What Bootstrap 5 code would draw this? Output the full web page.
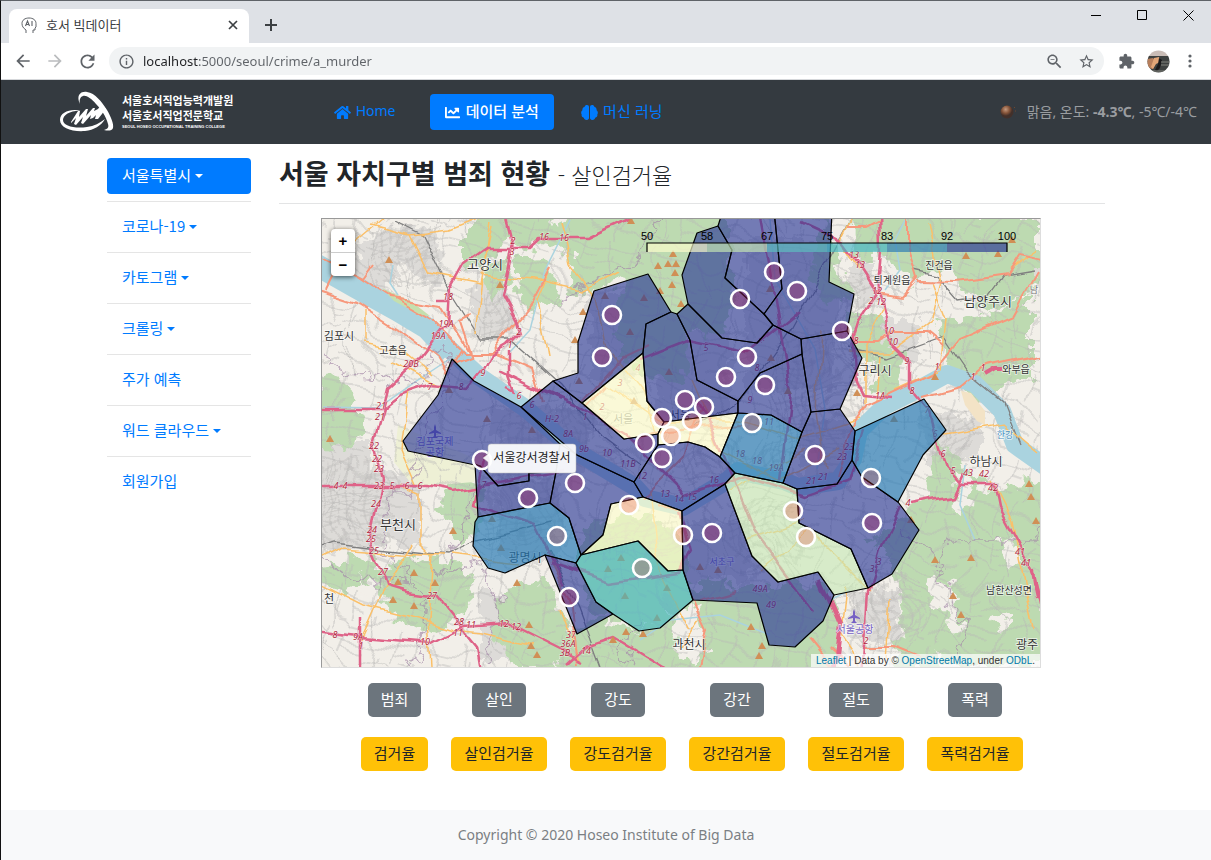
<!DOCTYPE html>
<html lang="ko">
<head>
<meta charset="utf-8">
<meta name="viewport" content="width=device-width, initial-scale=1">
<title>호서 빅데이터</title>
<link href="https://cdn.jsdelivr.net/npm/bootstrap@5.3.0/dist/css/bootstrap.min.css" rel="stylesheet">
<style>
  body{font-family:"Noto Sans","Noto Sans CJK KR",sans-serif;font-size:15px;line-height:24px;color:#212529}
  .window-frame{border-left:1px solid #111;border-top:1px solid #5f6368}
  .ko{font-family:"Noto Sans CJK KR",sans-serif}

  /* browser chrome */
  .tab-strip{background:#dee1e6;height:42px}
  .page-tab{width:240px;height:34px;border-radius:8px 8px 0 0;font-size:13px;line-height:16px;color:#3c4043;padding:0 10px 2px 12px}
  .plain-btn{border:0;background:none;padding:0;display:flex;align-items:center;justify-content:center;color:#5f6368}
  .win-btn{width:46px;height:28px;color:#000}
  .tool-btn{width:28px;height:28px}
  .toolbar-row{height:37px;padding:0 7px 0 8px;border-bottom:1px solid #d5d7da;gap:4px}
  .omnibox{height:28px;border-radius:14px;background:#f1f3f4;margin:0 4px;padding:0 4px 0 9px}
  .omnibox input{border:0;outline:0;padding:0;font-size:13px;color:transparent;
    background:linear-gradient(90deg,#202124 56px,#5f6368 56px);-webkit-background-clip:text;background-clip:text}

  /* site header */
  .site-nav{background:#343a40;height:64px;padding:0 14px 0 58px}
  .brand{width:172px;margin-right:88px;color:#fff;gap:7px}
  .brand-ko{font-size:11px;line-height:15px;font-weight:700}
  .brand-en{font-family:"Liberation Sans Narrow","Liberation Sans",sans-serif;font-size:4px;line-height:8px;font-weight:700}
  .site-nav .nav{gap:12px}
  .site-nav .nav-link,.side-nav .nav-link{color:#007bff;height:36px;padding:5px 15px 7px;line-height:24px;border-radius:4px;white-space:nowrap}
  .site-nav .nav-link.active,.side-nav .nav-link.active{background:#007bff;color:#fff}
  .site-nav .nav-link.active{font-weight:500}
  .site-nav .nav-item:first-child{margin-right:8px}
  .site-nav .latin{font-size:14px}
  .site-nav .nav-link svg{margin-right:1px}
  .weather{color:#9a9da0;font-size:14px;gap:10px}

  /* page body */
  .page-wrap{max-width:998px;gap:28px;padding-top:14px}
  .side-nav{width:144px}
  .side-nav .nav-item+.nav-item{border-top:1px solid #e5e5e5;margin-top:7px;padding-top:7px}
  .dropdown-toggle::after{margin-left:4px;vertical-align:3px}
  .page-title{font-size:27px;line-height:30px;font-weight:700;padding-bottom:15px;border-bottom:1px solid #e3e4e5;margin:0 0 14px;height:46px}
  .page-title small{font-size:22px;font-weight:300}
  .map-pad{padding:0 64px 0 42px}
  .map-box{border:1px solid;border-color:#999 #ddd #ddd #999;background:#f2efe9}
  .map-box>svg{display:block;width:100%;height:auto}
  .zoom-ctl{position:absolute;left:9px;top:10px;background:#fff;border-radius:4px;box-shadow:0 1px 5px rgba(0,0,0,.65);width:24px}
  .zoom-ctl button{width:24px;height:23px;font:700 15px "Liberation Sans",sans-serif;color:#000}
  .zoom-ctl button+button{border-top:1px solid #ccc;height:24px}
  .map-credit{position:absolute;right:0;bottom:0;background:rgba(255,255,255,.7);padding:0 5px;
    font:10px/13px "Liberation Sans",sans-serif;color:#333}
  .map-credit a{color:#0078a8;text-decoration:none}
  .crime-grid{display:grid;grid-template-columns:90fr repeat(5,119fr);max-width:685px;margin:15px auto 39px;row-gap:20px;justify-items:center}
  .crime-grid .btn{font-size:15px;line-height:22px;padding:4px 12px 6px;border-radius:4px;border:0;margin:1px 0;min-height:32px;box-shadow:0 0 0 1px var(--bs-btn-bg)}
  .crime-grid .btn-secondary{--bs-btn-bg:#6c757d}
  .crime-grid .btn-warning{--bs-btn-color:#212529}
  .site-footer{background:#f8f9fa;color:#7b7f83;font-size:14px;height:50px}

  /* map layers */
  .seoul polygon{stroke:#000;stroke-width:1.2;stroke-linejoin:round;fill-opacity:.62}
  .lv6{fill:#253494}.lv5{fill:#2378b4}.lv4{fill:#41b6c4}.lv2{fill:#c7e9b4}.lv1{fill:#ffffcc}
  .seoul .lv5{fill-opacity:.68}
  .stations circle{r:9px;fill:rgba(160,40,100,.42);stroke:#fff;stroke-width:2.6}
  .stations .warm{fill:rgba(230,70,60,.28)}
  .place{font-family:"Noto Sans CJK KR",sans-serif;fill:#333;text-anchor:middle;paint-order:stroke;stroke:#fff;stroke-width:1.6;stroke-opacity:.7}
  .exit-no{font:italic 9px "Noto Sans",sans-serif;fill:#b0263c;text-anchor:middle;paint-order:stroke;stroke:#fff;stroke-width:1;stroke-opacity:.6}
  .scale-no{font:11px "Liberation Sans",sans-serif;text-anchor:middle;fill:#000}
</style>
</head>
<body>
<div class="window-frame min-vh-100 d-flex flex-column">

  <div class="tab-strip d-flex">
    <div class="page-tab bg-white d-flex align-items-center align-self-end ms-2">
      <svg width="17" height="17" viewBox="0 0 17 17" fill="none" stroke="#5f6368"><path d="M5 16v-3C2 11 1 9 1 6.500C1 3 4 1 8 1s7 2 7 5.500V10l-1 1v2h-2v3"/><path d="M4.500 9l2-5 2 5M5.500 7.500h2M11 4v5" stroke-width="1.100"/></svg>
      <span class="ko ms-2 flex-grow-1">호서 빅데이터</span>
      <button class="plain-btn" aria-label="탭 닫기"><svg width="12" height="12" viewBox="0 0 12 12" stroke="#3c4043" stroke-width="1.700"><path d="M2 2l8 8M10 2l-8 8"/></svg></button>
    </div>
    <button class="plain-btn align-self-end mb-1 tool-btn ms-2" aria-label="새 탭"><svg width="14" height="14" viewBox="0 0 14 14" stroke="#3c4043" stroke-width="2"><path d="M7 1v12M1 7h12"/></svg></button>
    <div class="d-flex ms-auto">
      <button class="plain-btn win-btn" aria-label="최소화"><svg width="10" height="10"><path d="M0 5.500h10" stroke="#000"/></svg></button>
      <button class="plain-btn win-btn" aria-label="최대화"><svg width="10" height="10"><path d="M.5.500h9v9h-9z" fill="none" stroke="#000"/></svg></button>
      <button class="plain-btn win-btn" aria-label="닫기"><svg width="11" height="11"><path d="M.5.500l10 10M10.500.500l-10 10" stroke="#000"/></svg></button>
    </div>
  </div>

  <div class="toolbar-row bg-white d-flex align-items-center">
    <button class="plain-btn tool-btn" aria-label="뒤로"><svg width="20" height="20" viewBox="0 0 24 24" fill="currentColor"><path d="M20 11H7.830l5.590-5.590L12 4l-8 8 8 8 1.410-1.410L7.830 13H20v-2z"/></svg></button>
    <button class="plain-btn tool-btn" aria-label="앞으로"><svg width="20" height="20" viewBox="0 0 24 24" fill="#babcbe"><path d="M4 11h12.170l-5.590-5.590L12 4l8 8-8 8-1.410-1.410L16.170 13H4v-2z"/></svg></button>
    <button class="plain-btn tool-btn" aria-label="새로고침"><svg width="21" height="21" viewBox="0 0 24 24" fill="currentColor"><path d="M17.650 6.350C16.200 4.900 14.210 4 12 4c-4.420 0-7.990 3.580-7.990 8s3.570 8 7.990 8c3.730 0 6.840-2.550 7.730-6h-2.080c-.82 2.330-3.040 4-5.650 4-3.310 0-6-2.690-6-6s2.690-6 6-6c1.660 0 3.140.69 4.220 1.780L13 11h7V4l-2.350 2.350z"/></svg></button>
    <div class="omnibox d-flex align-items-center flex-grow-1">
      <svg width="17" height="17" viewBox="0 0 24 24" fill="#5f6368" class="me-2"><path d="M11 7h2v2h-2zm0 4h2v6h-2zm1-9C6.480 2 2 6.480 2 12s4.480 10 10 10 10-4.480 10-10S17.520 2 12 2zm0 18c-4.410 0-8-3.590-8-8s3.590-8 8-8 8 3.590 8 8-3.590 8-8 8z"/></svg>
      <input class="flex-grow-1" type="text" aria-label="주소" value="localhost:5000/seoul/crime/a_murder">
      <button class="plain-btn tool-btn me-1" aria-label="축소"><svg width="19" height="19" viewBox="0 0 24 24" fill="currentColor"><path d="M15.500 14h-.79l-.28-.27C15.410 12.590 16 11.110 16 9.500 16 5.910 13.090 3 9.500 3S3 5.910 3 9.500 5.910 16 9.500 16c1.610 0 3.090-.59 4.230-1.570l.27.28v.79l5 4.990L20.490 19l-4.990-5zm-6 0C7.010 14 5 11.990 5 9.500S7.010 5 9.500 5 14 7.010 14 9.500 11.990 14 9.500 14zM7 9h5v1H7z"/></svg></button>
      <button class="plain-btn tool-btn" aria-label="북마크"><svg width="17" height="17" viewBox="0 0 24 24" fill="currentColor"><path d="M22 9.240l-7.190-.62L12 2 9.190 8.630 2 9.240l5.460 4.730L5.820 21 12 17.270 18.180 21l-1.630-7.030L22 9.240zM12 15.400l-3.760 2.270 1-4.280-3.320-2.880 4.380-.38L12 6.100l1.710 4.040 4.380.38-3.320 2.880 1 4.280L12 15.400z"/></svg></button>
    </div>
    <button class="plain-btn tool-btn" aria-label="확장 프로그램"><svg width="17" height="17" viewBox="0 0 24 24" fill="currentColor"><path d="M20.500 11H19V7c0-1.100-.9-2-2-2h-4V3.500C13 2.120 11.880 1 10.500 1S8 2.120 8 3.500V5H4c-1.100 0-1.990.9-1.990 2v3.800H3.500c1.490 0 2.700 1.210 2.700 2.700s-1.210 2.700-2.700 2.700H2V20c0 1.100.9 2 2 2h3.800v-1.500c0-1.490 1.210-2.700 2.700-2.700 1.490 0 2.700 1.210 2.700 2.700V22H17c1.100 0 2-.9 2-2v-4h1.500c1.380 0 2.500-1.120 2.500-2.500S21.880 11 20.500 11z"/></svg></button>
    <button class="plain-btn tool-btn" aria-label="프로필"><svg width="23" height="23" viewBox="0 0 23 23"><defs><clipPath id="face"><circle cx="11.500" cy="11.500" r="11"/></clipPath></defs><g clip-path="url(#face)"><path fill="#c9bcb6" d="M0 0h23v7H0z"/><path fill="#3e4140" d="M0 6h23v17H0z"/><path fill="#b77f5c" d="M0 9l6-1 3 4-3 7-6-1z"/><path fill="#e2a678" d="M7 8l5-1 1 5-4 2-3 5-2-2z"/><path fill="#1c1b1c" d="M12 8l3 2-2 8-3 3-2-1 3-6z"/><path stroke="#81837d" d="M14 12h9M14 15h9M3 21h15"/></g></svg></button>
    <button class="plain-btn tool-btn" aria-label="메뉴"><svg width="4" height="16" fill="#5f6368"><circle cx="2" cy="3" r="1.600"/><circle cx="2" cy="8" r="1.600"/><circle cx="2" cy="13" r="1.600"/></svg></button>
  </div>

  <nav class="site-nav d-flex align-items-center">
    <a class="brand d-flex align-items-center text-decoration-none flex-shrink-0" href="#">
      <svg class="flex-shrink-0" width="56" height="42" viewBox="0 0 56 42" fill="#fff"><path d="M21 13C17 5 21 0 28 1c8 1 15 10 20 18 4 7 7 14 6 18-1 3-5 3-9 2 4-1 5-3 4-6-2-8-7-15-12-20-5-6-10-9-13-8-3 1-4 4-3 8z"/><path d="M23 20C12 19 4 24 4 29c0 6 12 9 24 7 7-1 13-4 18-8-4 7-11 11-20 12C13 41 1 37 1 29c0-8 11-12 22-9z"/><path d="M12 31l7-11 2 0-1 6 7-8h2l-2 7 7-8 2 0-1 3 4-2 3-4 2 1-2 3 5-1-4 6-4 5-3 0 1-4-3 3-3 1 1-4-8 9-2-1 2-6-7 8-2-1 2-6-5 5z"/></svg>
      <span class="ko text-nowrap"><span class="d-block brand-ko">서울호서직업능력개발원</span><span class="d-block brand-ko">서울호서직업전문학교</span><span class="d-block brand-en">SEOUL HOSEO OCCUPATIONAL TRAINING COLLEGE</span></span>
    </a>
    <ul class="nav flex-nowrap">
      <li class="nav-item"><a class="nav-link latin" href="#"><svg width="17" height="15" viewBox="0 0 576 512" fill="currentColor"><path d="M280.370 148.260L96 300.110V464a16 16 0 0 0 16 16l112.060-.29a16 16 0 0 0 15.920-16V368a16 16 0 0 1 16-16h64a16 16 0 0 1 16 16v95.640a16 16 0 0 0 16 16.050L464 480a16 16 0 0 0 16-16V300L295.670 148.260a12.190 12.190 0 0 0-15.300 0zM571.600 251.470L488 182.560V44.050a12 12 0 0 0-12-12h-56a12 12 0 0 0-12 12v72.610L318.470 43a48 48 0 0 0-61 0L4.340 251.470a12 12 0 0 0-1.600 16.900l25.500 31A12 12 0 0 0 45.150 301l235.220-193.740a12.190 12.190 0 0 1 15.300 0L530.900 301a12 12 0 0 0 16.900-1.600l25.500-31a12 12 0 0 0-1.700-16.930z"/></svg> Home</a></li>
      <li class="nav-item"><a class="nav-link active ko" href="#" aria-current="page"><svg width="15" height="15" viewBox="0 0 512 512" fill="currentColor"><path d="M496 384H64V80c0-8.840-7.160-16-16-16H16C7.160 64 0 71.160 0 80v336c0 17.670 14.330 32 32 32h464c8.840 0 16-7.160 16-16v-32c0-8.840-7.160-16-16-16zM464 96H345.940c-21.380 0-32.090 25.850-16.970 40.970l32.400 32.400L288 242.750l-73.370-73.370c-12.500-12.500-32.760-12.500-45.250 0l-68.690 68.690c-6.250 6.250-6.250 16.380 0 22.630l22.620 22.620c6.250 6.250 16.380 6.250 22.630 0L192 237.250l73.370 73.370c12.500 12.500 32.760 12.500 45.250 0l96-96 32.400 32.400c15.120 15.120 40.970 4.410 40.970-16.970V112c.01-8.840-7.150-16-15.990-16z"/></svg> 데이터 분석</a></li>
      <li class="nav-item"><a class="nav-link ko" href="#"><svg width="17" height="15" viewBox="0 0 17 15" fill="currentColor"><path d="M8 2v11c0 1-1 2-2.200 1.900C4 15 3 14 2.800 12.800 1 12.500.3 11 .7 9.600-.3 8 .2 6 1.400 5.300 1.200 3.600 2 2.300 3.500 2 4 .5 5 0 6 .1 7.200.1 8 .9 8 2zM9 2v11c0 1 1 2 2.200 1.900C13 15 14 14 14.200 12.800c1.800-.3 2.500-1.800 2.100-3.200 1-1.600.5-3.600-.7-4.300.2-1.700-.6-3-2.100-3.300C13 .5 12 0 11 .1 9.800.1 9 .9 9 2z"/></svg> 머신 러닝</a></li>
    </ul>
    <div class="weather d-flex align-items-center ms-auto text-nowrap">
      <svg width="18" height="16" viewBox="0 0 18 16"><defs><radialGradient id="sun" cx=".4" cy=".3"><stop offset="0" stop-color="#c49a80"/><stop offset=".6" stop-color="#855338"/><stop offset="1" stop-color="#43302a"/></radialGradient></defs><circle cx="8" cy="8" r="6.500" fill="url(#sun)"/><path stroke="#70472f" d="M15 4l1-1M16 7h1"/></svg>
      <span>맑음, 온도: <strong>-4.3℃</strong>, -5℃/-4℃</span>
    </div>
  </nav>

  <div class="page-wrap d-flex w-100 mx-auto flex-grow-1">
    <aside class="flex-shrink-0">
      <ul class="side-nav nav flex-column ko">
        <li class="nav-item"><a class="nav-link active dropdown-toggle" href="#">서울특별시</a></li>
        <li class="nav-item"><a class="nav-link dropdown-toggle" href="#">코로나-19</a></li>
        <li class="nav-item"><a class="nav-link dropdown-toggle" href="#">카토그램</a></li>
        <li class="nav-item"><a class="nav-link dropdown-toggle" href="#">크롤링</a></li>
        <li class="nav-item"><a class="nav-link" href="#">주가 예측</a></li>
        <li class="nav-item"><a class="nav-link dropdown-toggle" href="#">워드 클라우드</a></li>
        <li class="nav-item"><a class="nav-link" href="#">회원가입</a></li>
      </ul>
    </aside>

    <main class="flex-grow-1">
      <h1 class="page-title ko">서울 자치구별 범죄 현황 <small>- 살인검거율</small></h1>
      <div class="map-pad">
      <div class="map-box position-relative">
        <svg viewBox="322 219 718 448" role="img" aria-label="서울 자치구별 살인검거율 지도">
          <defs>
            <filter id="rough" x="-5%" y="-5%" width="110%" height="110%"><feTurbulence type="fractalNoise" baseFrequency=".07" numOctaves="3" seed="4"/><feDisplacementMap in="SourceGraphic" scale="26" xChannelSelector="R" yChannelSelector="G"/></filter>
            <filter id="bend" x="-5%" y="-5%" width="110%" height="110%"><feTurbulence type="fractalNoise" baseFrequency=".018" numOctaves="2" seed="9"/><feDisplacementMap in="SourceGraphic" scale="46" xChannelSelector="R" yChannelSelector="G"/></filter>
            <filter id="curve" x="-5%" y="-5%" width="110%" height="110%"><feTurbulence type="fractalNoise" baseFrequency=".035" numOctaves="1" seed="2"/><feDisplacementMap in="SourceGraphic" scale="14" xChannelSelector="R" yChannelSelector="G"/></filter>
            <pattern id="lanes" width="46" height="40" patternUnits="userSpaceOnUse" patternTransform="rotate(14)"><path d="M0 9h46M0 29h26l8 6h12M10 0v20l5 20M33 0v29M33 18h13M15 29v-8" fill="none" stroke="#b9b8b6" stroke-width=".8"/></pattern>
            <pattern id="blocks" width="18" height="14" patternUnits="userSpaceOnUse" patternTransform="rotate(-12)"><path d="M0 5h18M0 11h10M5 0v14M13 0v11" fill="none" stroke="#bdbbb9" stroke-width=".8"/></pattern>
            <path id="peak" d="M0-4l4 7h-8z" fill="#d08f55"/>
          </defs>

          <rect x="300" y="200" width="760" height="490" fill="#f2efe9"/>
          <g filter="url(#rough)">
            <path fill="#dddbd8" d="M365 235l60-10 20 30-5 30-40-20-22 30-30-20zM470 290l35-20 10 60-40 10zM300 440h70v110H300zM340 470h80v75h-70zM490 410h100v60l-80 10zM590 290h50v90h-50zM650 330h80v100h-70zM745 240h90v150h-90zM880 320h40v40h-40zM845 260h30v40h-30zM920 410l60 10v40h-50zM1010 270h40v20h-40zM500 480h60v80h-60zM690 520h60v60h-60zM800 420h50v60h-50zM480 590h60v70h-60zM850 590h50v50h-50z"/>
            <path fill="#bddab1" d="M460 235l30-25 50-5 30 30-30 12-30-5-20 20-30 5zM480 270l25-10 5 30-20 8zM515 255l35 5 10 40-30 12-15-30zM570 205l70-5h90v60l-30 40-30 15-28-42-55 20-17 0 5-30-25-20z"/>
            <path fill="#bddab1" d="M640 220l60-10 35 60-10 65-35-8-5 55-35-5-30-20 0-60zM830 215l10 60 15 20-30 10-15-40z"/>
            <path fill="#bddab1" d="M320 375l25 10 22 45-30 20-35-10zM455 470l30 15-5 40-18 20-25-35zM415 555l50 10 10 30-30 40-50-15-20-50zM330 560l45-5 5 25-35 15-30-15zM500 590l45-10 20 40-10 50h-40l-20-35zM555 640l40-20 60 10 25-40 60 15 20 45-30 30H560zM585 530l40-20 50 20 20 50-40 50-60-15-20-40z"/>
            <path fill="#bddab1" d="M700 580l50 10 50-10 30 10 10 90H700zM850 215h190v75l-55 20-40-40-30 15-30-30-30 5zM845 310l35 5 10 40-35 5zM940 325l45-10 45-20v80l-55 25-30-50zM875 345l30 5-10 50-25-5zM920 500l25-60 40 50 60-10v185h-95l-45-35-10-70-25-15zM890 640l30-10 25 40h-45z"/>
            <path fill="#f2efe9" d="M922 580l14-10 24 30-20 10zM945 605l10-3 6 30-10 4zM990 620l22-6-8 18zM1000 540l10-4 12 28-10 3zM957 470l15 6-2 30-12 10zM360 570l10 30-8-4zM670 615l25-12 15 50-30 10z"/>
          </g>
          <path fill="#eef0d5" d="M398 425l80 35-4 22-60 5-20-25z"/>
          <g filter="url(#bend)"><path fill="url(#lanes)" d="M270 170h800v530H270z"/><path fill="url(#blocks)" d="M370 225h70v60h-60zM480 275h35v65h-40zM300 460h90v90h-90zM500 410h110v60H500zM740 500h60v70h-60zM770 330h90v130h-90zM690 440h90v40h-90zM925 415h45v40h-40zM480 480h80v60h-80zM600 520h80v40h-80zM840 270h40v60h-40zM850 580h70v60h-70z"/></g>

          <g fill="none" stroke="#aad3df">
            <path stroke-width="22" d="M315 264l42 24 40 22 30 18 23 25"/>
            <path stroke-width="18" stroke-linejoin="round" d="M446 346l34 31 45 31 52 44 58 35 10 11 38 9 45-27 10-9 46 10 14 6 40-6 15-22 6-28 26-25 38-19 24-13 28 10 27 27 13 34 34 24"/>
            <path stroke-width="1.500" d="M393 265l-3 18 8 12M323 407l55 1 40-28 30-20M570 220l-25 50-15 60-20 22M885 290l15-20-5-30 10-20M965 465l-5 40 15 35M770 219l5 60 40 70 10 60-8 60M850 590l-20 10M640 640l30-20 50-5 50 20"/>
          </g>
          <path fill="#f3e3c6" d="M961 391l10 2 14 18 0 14-8-4-12-16z"/>
          <path fill="#c5dfae" d="M382 288l30 14 18 14-10-1-26-14z"/>

          <g fill="none" stroke="#a58aa8" stroke-width="1.600" stroke-opacity=".65" filter="url(#rough)">
            <path d="M323 353l20 20 28 2 20 8 25-2 12-12 10-22 12 4-2 38-26 40-6 40-4 25h-24l-5 60 20 15 24 30-4 40-12 40"/>
            <path d="M560 300l30-18 45-20 25-42M475 480l-10 50-25 45 40-15 20 40-10 60M860 310l-10 40 10 50M900 530l40 30 5-20 40 0 50 0 10-40M940 565l10 40 15 20-5 35M640 620l-20 30 10 15M323 560l30 20 60 5"/>
          </g>

          <g filter="url(#curve)">
          <g fill="none" stroke="#808080" stroke-width="1.300">
            <path d="M393 220l29 15 25 53 33 52h30l50 45 40 50 40 30M313 550l20-7 114 12 26-12 80-20M914 270l22 5 23 27 28-4 16-22 30-5M850 348l37 9 56-20 24 35 36 30 17 43M600 667l-22-60-30-60M850 220l-60 110-50 70-50 30"/>
          </g>
          <g fill="none" stroke="#fbc069" stroke-width="1.500">
            <path d="M350 245l30-25M370 225l40 10 40-5 30-12M410 235l20 40 50 10 12-60M490 220l-8 60-7 55M480 275l55 5 45 10 40-20M550 270l-12 30 10 60M363 342l40 8 30 25M365 340v-30M393 360l50 28M410 390l-8 60 15 35M400 485l20 8 0 50 10 10M313 580l50 25 40 10 50 15 30 3 50 12M433 555l-5 65 3 45M412 545l-30 50-20 45M313 563l30-15 60 5 40 2M450 555l70 8"/>
            <path d="M560 220l10 45 25 30 10 50 40 50 10 40M690 380l30 70 60 30 60-30M600 380l60 40 80 0 60 20 60-20M727 490l80-40M745 540l60-20M760 570l50-40 60 60M650 490l10 80 30 60M825 470l-8-60 5-80M850 220l-10 20 20 30M885 305l-20 40 0 60M850 352h40l40-30 10-40-12-60M930 280l15 40-5 50-45 20M880 355l-4 45M1039 250l-30 20M1039 455l-35-30-60 10M992 480l20 40 10 50 12 60M845 585l-5 50 20 30M890 600l-4 60M700 620l-20 30M580 660l-20-50"/>
          </g>
          <g fill="none" stroke="#f7987b" stroke-width="2">
            <path d="M313 289l44 14 40 25 40 30 10 17M357 275l30 20 46 27 30 30h30l40 16 10 34M493 352l40-50 17-32M323 290l14-28M390 298l50 8 30 50-20 8M460 350l-12 20M313 253l50 25 10-14M470 315l-12 6 10 30"/>
            <path d="M847 227h20l13-7M907 210v35l10 33-14 17-26-4M917 281l40 1 50-7 13-20 28 6M853 342h24l20-10h30l16 13M1037 272l-24 43-53 23-30 37-63 30-15 23-15 50M923 398l37-10 27-23 62-13M582 403l40-45 25-12M586 408l20-23M634 440l30-10 80-5M643 497l40-40 18-50M658 503l25 8M693 600l14 30-10 47M700 602l35-10M550 560l20 40 8 65M865 645h30l25 10M830 650l30 27M810 640l30 37"/>
          </g>
          <g fill="none" stroke="#df6488" stroke-width="2.500" stroke-linejoin="round">
            <path d="M505 210l8 32-2 10-4 23-4 20 14 27 3 10-13 13-17 10-7 13-16 20-37-3-30 10-17 13-10 37 9 35-7 27-5 30 3 13 10 23 4 14 20 6 30 4 16 20 10 13 14 17 5 30"/>
            <path d="M633 217l-46 22h-50l-10 9h-40l-24 17-13 23-2 37-8 7-20 26-33 30-5 20M313 408l70 0M313 486h114l26 5 50-9 60-12M313 632l47 5 73 6 30-16 44-3 16 8 60 30M361 620v57M437 300h12M509 350v25l6 18-8-4M560 400l-60-30"/>
            <path d="M880 210l1 40-2 25 1 15 8 28 2 24 20 20v26l20 24 10 38 6 17 14 16h35l5 25 20 37 13 30 8 36M800 222l43 20 17 23 17 27-20 30-4 13 4 47 6 13 30 3M910 503l43-8 10-22M567 665l20-18 26-9 57 35M900 507l-20 43-12 40-5 87M535 387l40 18 50 30 60 60 60-20 60 20 45-15 15-50M693 400l20 30 40 100 60 80M680 512l10 40-10 20-70 10-60-20M640 360l50-20 60 12 50-40M760 220l15 80 15 90-10 90M485 455l-10 50 60 20 30 60"/>
            <path d="M985 375l10-6h8M820 580l20 45-5 42M1032 570l5 30" stroke-width="4"/>
          </g>
          </g>

          <g>
            <use href="#peak" x="389" y="260"/><use href="#peak" x="500" y="285"/><use href="#peak" x="631" y="221"/><use href="#peak" x="673" y="254"/><use href="#peak" x="658" y="266"/><use href="#peak" x="668" y="264"/><use href="#peak" x="676" y="264"/><use href="#peak" x="675" y="273"/><use href="#peak" x="672" y="285"/><use href="#peak" x="681" y="304"/><use href="#peak" x="660" y="291"/><use href="#peak" x="605" y="296"/><use href="#peak" x="644" y="298"/><use href="#peak" x="583" y="312"/><use href="#peak" x="575" y="340"/><use href="#peak" x="630" y="332"/><use href="#peak" x="669" y="372"/><use href="#peak" x="579" y="381"/><use href="#peak" x="634" y="401"/><use href="#peak" x="770" y="289"/><use href="#peak" x="771" y="358"/><use href="#peak" x="788" y="391"/><use href="#peak" x="449" y="390"/><use href="#peak" x="487" y="419"/><use href="#peak" x="532" y="430"/><use href="#peak" x="330" y="439"/><use href="#peak" x="453" y="531"/><use href="#peak" x="492" y="519"/><use href="#peak" x="501" y="548"/><use href="#peak" x="517" y="583"/><use href="#peak" x="414" y="573"/><use href="#peak" x="398" y="582"/><use href="#peak" x="435" y="583"/><use href="#peak" x="393" y="600"/><use href="#peak" x="414" y="606"/><use href="#peak" x="529" y="625"/><use href="#peak" x="531" y="646"/><use href="#peak" x="537" y="655"/><use href="#peak" x="621" y="558"/><use href="#peak" x="608" y="569"/><use href="#peak" x="667" y="588"/><use href="#peak" x="625" y="596"/><use href="#peak" x="657" y="618"/><use href="#peak" x="643" y="634"/><use href="#peak" x="626" y="632"/><use href="#peak" x="613" y="640"/><use href="#peak" x="700" y="567"/><use href="#peak" x="718" y="570"/><use href="#peak" x="751" y="627"/><use href="#peak" x="762" y="646"/><use href="#peak" x="759" y="656"/><use href="#peak" x="966" y="256"/><use href="#peak" x="998" y="254"/><use href="#peak" x="1012" y="240"/><use href="#peak" x="935" y="377"/><use href="#peak" x="857" y="393"/><use href="#peak" x="894" y="419"/><use href="#peak" x="1029" y="484"/><use href="#peak" x="1031" y="497"/><use href="#peak" x="1036" y="521"/><use href="#peak" x="935" y="560"/><use href="#peak" x="971" y="558"/><use href="#peak" x="953" y="596"/><use href="#peak" x="961" y="615"/><use href="#peak" x="911" y="520"/>
          </g>

          <g class="exit-no">
            <text x="513" y="244">2</text><text x="512" y="255">3</text><text x="544" y="240">16</text><text x="564" y="241">16</text><text x="448" y="300">18</text><text x="446" y="327">19A</text><text x="438" y="339">19A</text><text x="411" y="367">20B</text><text x="381" y="409">21</text><text x="380" y="420">21</text><text x="519" y="335">2</text><text x="510" y="348">1</text><text x="483" y="376">9</text><text x="430" y="390">7</text><text x="461" y="390">8</text><text x="519" y="399">6</text><text x="532" y="408">6</text><text x="552" y="422">H-2</text><text x="568" y="437">8A</text><text x="585" y="420">1</text><text x="602" y="410">2</text><text x="620" y="386">3</text><text x="638" y="371">4</text><text x="706" y="351">5</text><text x="757" y="371">8</text><text x="750" y="403">9</text><text x="769" y="425">11</text>
            <text x="374" y="449">22</text><text x="377" y="462">22</text><text x="379" y="472">23</text><text x="379" y="489">23</text><text x="392" y="489">5</text><text x="336" y="489">4</text><text x="345" y="489">4</text><text x="407" y="489">6</text><text x="420" y="489">6</text><text x="484" y="488">7</text><text x="376" y="507">24</text><text x="372" y="533">24</text><text x="371" y="542">25</text><text x="374" y="554">25</text><text x="383" y="575">27</text><text x="432" y="599">27</text><text x="459" y="625">28</text><text x="471" y="628">11</text><text x="458" y="636">11</text><text x="504" y="627">12</text><text x="516" y="630">12</text><text x="425" y="645">10</text><text x="358" y="640">9A</text><text x="335" y="638">8</text><text x="361" y="649">1</text><text x="571" y="638">37</text><text x="568" y="647">36A</text><text x="565" y="656">3B</text><text x="586" y="654">14</text>
            <text x="584" y="452">9b</text><text x="607" y="456">10</text><text x="628" y="467">11B</text><text x="642" y="479">12</text><text x="665" y="497">13</text><text x="679" y="502">14</text><text x="692" y="500">15</text><text x="714" y="483">16</text><text x="740" y="457">18</text><text x="757" y="464">18</text><text x="776" y="471">19A</text><text x="811" y="484">21</text><text x="823" y="480">21</text><text x="842" y="460">23</text><text x="849" y="450">23</text><text x="872" y="572">3</text><text x="879" y="565">3</text><text x="760" y="592">49A</text><text x="771" y="608">49</text>
            <text x="854" y="258">13</text><text x="860" y="268">13</text><text x="877" y="294">12</text><text x="871" y="304">2</text><text x="881" y="305">12</text><text x="889" y="334">10</text><text x="893" y="345">10</text><text x="907" y="364">9</text><text x="912" y="394">8</text><text x="880" y="399">1A</text><text x="856" y="344">8</text><text x="937" y="370">1</text><text x="973" y="380">1</text><text x="983" y="371">1</text><text x="927" y="413">7</text><text x="935" y="437">6</text><text x="943" y="457">6</text><text x="953" y="474">5</text><text x="968" y="476">43</text><text x="984" y="477">42</text><text x="993" y="491">42</text><text x="908" y="506">4</text><text x="1020" y="555">41</text><text x="1026" y="566">41</text><text x="866" y="644">2</text>
          </g>
          <g class="place" font-size="13">
            <text x="485" y="269">고양시</text><text x="339" y="340" font-size="11">김포시</text><text x="393" y="354" font-size="10">고촌읍</text><text x="939" y="269" font-size="10">진건읍</text><text x="892" y="284" font-size="10">퇴계원읍</text><text x="988" y="306">남양주시</text><text x="875" y="375" font-size="12">구리시</text><text x="1016" y="373" font-size="10">와부읍</text><text x="986" y="466" font-size="12">하남시</text><text x="1009" y="594" font-size="10">남한산성면</text><text x="1027" y="649" font-size="12">광주</text><text x="689" y="649" font-size="12">과천시</text><text x="398" y="529">부천시</text><text x="525" y="562" font-size="12">광명시</text><text x="623" y="423" font-size="11" fill="#888">서울</text><text x="680" y="420" font-size="12">서울</text><text x="329" y="603" font-size="11">천</text>
            <g font-size="9" fill="#7661c4"><text x="435" y="445" font-size="10">김포국제</text><text x="435" y="456" font-size="10">공항</text><text x="855" y="633" font-size="10">서울공항</text><text x="722" y="565">서초구</text><text x="1005" y="438" fill="#4b8fc0">한강</text><text x="1034" y="293" fill="#777">남</text></g>
          </g>
          <g fill="#7661c4"><path d="M435 424l1 3v3l5 3v1l-5-1v3l2 2h-6l2-2v-3l-5 1v-1l5-3v-3zM854 609l1 3v3l5 3v1l-5-1v3l2 2h-6l2-2v-3l-5 1v-1l5-3v-3z"/></g>

          <g class="seoul">
            <polygon class="lv6" points="452,359 474,381 521,407 560,444 556,472 529,473 529,481 498,486 480,466 408,451 403,441 438,395"/>
            <polygon class="lv6" points="475,464 480,466 498,486 529,481 529,473 556,472 550,503 478,517"/>
            <polygon class="lv5" points="478,517 550,503 569,518 581,555 576,563 545,555 505,573 488,568 473,546 475,522"/>
            <polygon class="lv6" points="545,555 576,563 596,602 613,614 577,634"/>
            <polygon class="lv6" points="560,444 577,455 634,482 643,497 611,504 603,535 581,555 569,518 550,503 556,472"/>
            <polygon class="lv6" points="521,407 553,381 582,403 624,439 658,434 658,445 634,482 577,455"/>
            <polygon class="lv6" points="594,291 648,274 671,312 646,324 643,353 582,403 553,381 578,373 578,342"/>
            <polygon class="lv1" points="643,353 647,401 664,422 658,434 624,439 582,403"/>
            <polygon class="lv6" points="671,312 677,314 690,340 697,380 738,401 738,413 664,422 647,401 643,353 646,324"/>
            <polygon class="lv1" points="664,422 738,413 720,457 705,447 688,442 658,445 658,434"/>
            <polygon class="lv6" points="634,482 658,445 688,442 705,447 720,457 735,473 725,484 682,511 643,497"/>
            <polygon class="lv1" points="643,497 682,511 683,570 668,571 638,541 581,555 603,535 611,504"/>
            <polygon class="lv4" points="638,541 668,571 683,570 693,600 660,628 639,631 613,614 596,602 576,563 581,555"/>
            <polygon class="lv6" points="682,511 725,484 752,556 778,582 818,572 834,595 823,621 795,647 769,645 757,603 693,600 683,570"/>
            <polygon class="lv2" points="725,484 735,473 783,483 797,489 799,523 851,549 868,588 834,595 818,572 778,582 752,556"/>
            <polygon class="lv6" points="797,489 837,484 852,460 862,477 898,502 919,530 892,574 868,588 851,549 799,523"/>
            <polygon class="lv5" points="855,431 924,399 946,430 923,455 898,502 862,477 852,460"/>
            <polygon class="lv6" points="811,412 840,409 855,431 852,460 837,484 797,489 783,483 802,432"/>
            <polygon class="lv5" points="738,413 771,415 802,432 783,483 735,473 720,457"/>
            <polygon class="lv6" points="738,401 760,373 802,354 811,412 802,432 771,415 738,413"/>
            <polygon class="lv6" points="801,339 847,331 862,358 840,409 811,412 802,354"/>
            <polygon class="lv6" points="677,314 688,304 722,338 757,343 773,325 801,339 802,354 760,373 738,401 697,380 690,340"/>
            <polygon class="lv6" points="688,304 682,275 697,233 718,226 732,250 725,278 764,314 773,325 757,343 722,338"/>
            <polygon class="lv6" points="718,226 723,210 774,210 782,289 764,314 725,278 732,250"/>
            <polygon class="lv6" points="774,210 832,210 829,282 854,294 847,331 801,339 773,325 764,314 782,289"/>
          </g>

          <g class="stations">
            <circle cx="612" cy="315"/><circle cx="602" cy="357"/><circle cx="740" cy="299"/><circle cx="774" cy="272"/><circle cx="797" cy="291"/><circle cx="842" cy="331"/><circle cx="747" cy="357"/><circle cx="726" cy="377"/><circle cx="765" cy="385"/><circle cx="685" cy="400"/><circle cx="704" cy="407"/><circle cx="662" cy="418"/><circle class="warm" cx="692" cy="421"/><circle class="warm" cx="671" cy="436"/><circle cx="645" cy="443"/><circle cx="662" cy="458"/><circle class="warm" cx="752" cy="423"/><circle cx="815" cy="455"/><circle class="warm" cx="871" cy="478"/><circle cx="872" cy="523"/><circle class="warm" cx="793" cy="511"/><circle class="warm" cx="806" cy="537"/><circle cx="712" cy="533"/><circle class="warm" cx="683" cy="535"/><circle class="warm" cx="629" cy="505"/><circle cx="575" cy="483"/><circle cx="528" cy="498"/><circle class="warm" cx="557" cy="536"/><circle class="warm" cx="642" cy="568"/><circle cx="569" cy="597"/><circle cx="482" cy="460"/>
          </g>

          <g fill-opacity=".65"><path class="lv1" d="M647 243h60v9h-60z"/><path class="lv2" d="M707 243h60v9h-60z"/><path fill="#5cc1c0" d="M767 243h60v9h-60z"/><path class="lv4" d="M827 243h60v9h-60z"/><path class="lv5" d="M887 243h60v9h-60z"/><path class="lv6" d="M947 243h60v9h-60z"/></g>
          <path d="M647 252v-9h360v9" fill="none" stroke="#000" stroke-width="1.200"/>
          <g class="scale-no"><text x="647" y="240">50</text><text x="707" y="240">58</text><text x="767" y="240">67</text><text x="827" y="240">75</text><text x="887" y="240">83</text><text x="947" y="240">92</text><text x="1007" y="240">100</text></g>

          <path d="M491 444h82q3 0 3 3v23q0 3-3 3h-82q-3 0-3-3v-8l-5-4 5-4v-7q0-3 3-3z" fill="#fff" fill-opacity=".92" stroke="#bbb" stroke-width=".5"/>
          <text class="ko" x="532" y="462" font-size="12" fill="#222" text-anchor="middle">서울강서경찰서</text>
        </svg>
        <div class="zoom-ctl"><button class="plain-btn" aria-label="확대">+</button><button class="plain-btn" aria-label="지도 축소">−</button></div>
        <div class="map-credit"><a href="#">Leaflet</a> | Data by © <a href="#">OpenStreetMap</a>, under <a href="#">ODbL</a>.</div>
      </div>
      </div>

      <div class="crime-grid ko">
        <button class="btn btn-secondary">범죄</button><button class="btn btn-secondary">살인</button><button class="btn btn-secondary">강도</button><button class="btn btn-secondary">강간</button><button class="btn btn-secondary">절도</button><button class="btn btn-secondary">폭력</button>
        <button class="btn btn-warning">검거율</button><button class="btn btn-warning">살인검거율</button><button class="btn btn-warning">강도검거율</button><button class="btn btn-warning">강간검거율</button><button class="btn btn-warning">절도검거율</button><button class="btn btn-warning">폭력검거율</button>
      </div>
    </main>
  </div>

  <footer class="site-footer d-flex align-items-center justify-content-center">Copyright © 2020 Hoseo Institute of Big Data</footer>
</div>
<script src="https://cdn.jsdelivr.net/npm/bootstrap@5.3.0/dist/js/bootstrap.bundle.min.js"></script>
</body>
</html>
